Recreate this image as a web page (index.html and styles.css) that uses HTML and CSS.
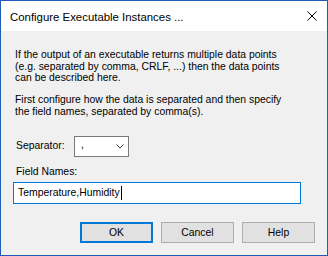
FILE: index.html
```html
<!DOCTYPE html>
<html lang="en">
<head>
  <meta charset="UTF-8" />
  <title>Configure Executable Instances ...</title>
  <link rel="stylesheet" href="styles.css">
</head>
<body>
  <div class="window">
    <div class="titlebar">
      <span class="title">Configure Executable Instances ...</span>
      <svg class="close" width="10" height="10" viewBox="0 0 10 10">
        <path d="M0.5 0.5 L9.5 9.5 M9.5 0.5 L0.5 9.5" stroke="#000" stroke-width="1" fill="none" />
      </svg>
    </div>

    <div class="content">
      <p class="text">If the output of an executable returns multiple data points<br>(e.g. separated by comma, CRLF, ...) then the data points<br>can be described here.</p>
      <p class="text second">First configure how the data is separated and then specify<br>the field names, separated by comma(s).</p>

      <div class="sep-row">
        <label class="label">Separator:</label>
        <div class="combo">
          <span class="combo-value">,</span>
          <svg class="chevron" width="8" height="5" viewBox="0 0 8 5">
            <path d="M0.5 0.5 L4 4 L7.5 0.5" stroke="#3c3c3c" stroke-width="1" fill="none" />
          </svg>
        </div>
      </div>

      <label class="label field-label">Field Names:</label>
      <div class="field">Temperature,Humidity<span class="caret"></span></div>

      <div class="buttons">
        <button class="btn default">OK</button>
        <button class="btn">Cancel</button>
        <button class="btn">Help</button>
      </div>
    </div>
  </div>
</body>
</html>
```

FILE: styles.css
```css
:root {
  --frame: #1f5cb6;
  --face: #f0f0f0;
  --accent: #0078d7;
  --btn-bg: #e1e1e1;
  --btn-border: #adadad;
}

body {
  margin: 0;
  font-family: "Liberation Sans", Arial, sans-serif;
  color: #000;
}

.window {
  width: 328px;
  height: 256px;
  box-sizing: border-box;
  border: 1px solid var(--frame);
  background-color: var(--face);
  display: flex;
  flex-direction: column;
}

.titlebar {
  height: 30px;
  background-color: #ffffff;
  display: flex;
  align-items: center;
  padding: 0 9px 0 9px;
}

.title {
  flex: 1;
  font-size: 11.4px;
  padding-top: 2px;
}

.close {
  display: block;
  margin-right: 1px;
}

.content {
  padding: 18px 12px 0 12px;
  font-size: 10.4px;
  line-height: 11.7px;
}

.text {
  margin: 0;
  padding-left: 2px;
  white-space: nowrap;
}

.text.second {
  margin-top: 10px;
}

.sep-row {
  display: flex;
  align-items: flex-start;
  margin-top: 18px;
}

.label {
  display: block;
  padding-left: 3px;
}

.sep-row .label {
  margin-top: 4px;
  width: 58px;
}

.combo {
  width: 55px;
  height: 21px;
  box-sizing: border-box;
  border: 1px solid #7a7a7a;
  background-color: #fff;
  display: flex;
  align-items: center;
  justify-content: space-between;
  padding: 0 4px 2px 6px;
}

.chevron {
  display: block;
  margin-top: 2px;
}

.field-label {
  margin-top: 9px;
}

.field {
  margin-top: 5px;
  width: 288px;
  height: 22px;
  box-sizing: border-box;
  border: 1px solid var(--accent);
  background-color: #fff;
  display: flex;
  align-items: center;
  padding-left: 4px;
}

.caret {
  display: inline-block;
  width: 1px;
  height: 14px;
  background-color: #000;
  margin-left: 1px;
}

.buttons {
  display: flex;
  justify-content: flex-end;
  gap: 8px;
  margin-top: 18px;
}

.btn {
  width: 73px;
  height: 21px;
  box-sizing: border-box;
  border: 1px solid var(--btn-border);
  background-color: var(--btn-bg);
  font-family: inherit;
  font-size: 10.4px;
  color: #000;
  padding: 0;
}

.btn.default {
  border: 2px solid var(--accent);
}
```
